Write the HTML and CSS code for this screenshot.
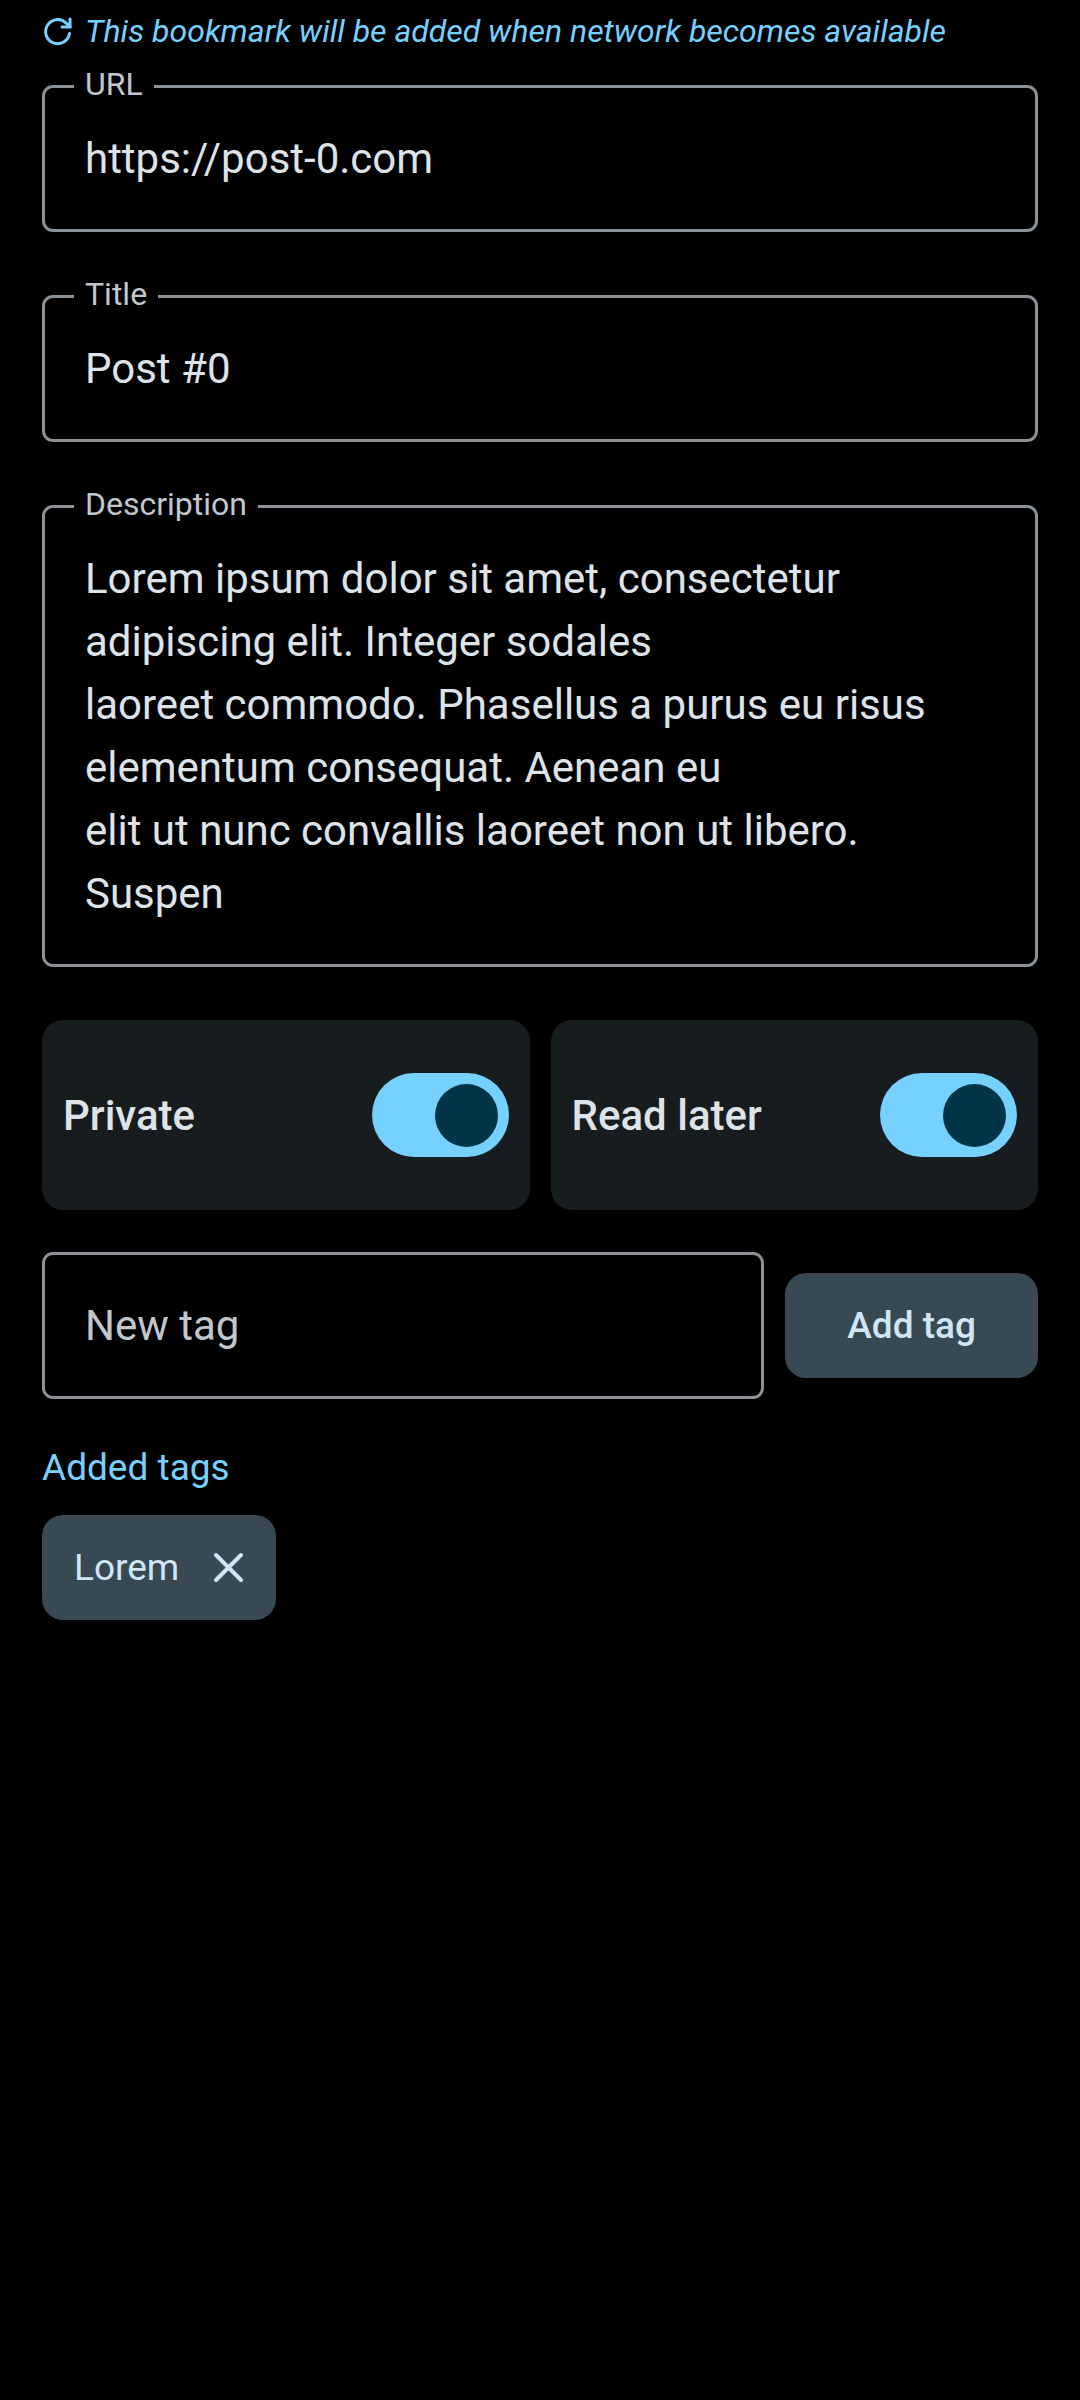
FILE: index.html
```html
<!DOCTYPE html>
<html lang="en">
<head>
<meta charset="utf-8">
<meta name="viewport" content="width=device-width, initial-scale=1">
<title>Edit bookmark</title>
<link rel="stylesheet" href="styles.css">
</head>
<body>
<main class="editor">
  <p class="status">
    <svg class="status-icon" viewBox="0 0 32 32" aria-hidden="true">
      <path d="M27.500 18.500A12 12 0 1 1 24 8L28 11.500"/>
      <path d="M28 4V12H20"/>
    </svg>
    <em>This bookmark will be added when network becomes available</em>
  </p>

  <form class="form">
    <div class="fields">
      <div class="field">
        <label class="field-label" for="url">URL</label>
        <input class="field-input" id="url" type="text" value="https://post-0.com">
      </div>
      <div class="field">
        <label class="field-label" for="title">Title</label>
        <input class="field-input" id="title" type="text" value="Post #0">
      </div>
      <div class="field">
        <label class="field-label" for="description">Description</label>
        <textarea class="field-input field-area" id="description" rows="6">Lorem ipsum dolor sit amet, consectetur adipiscing elit. Integer sodales
laoreet commodo. Phasellus a purus eu risus elementum consequat. Aenean eu
elit ut nunc convallis laoreet non ut libero. Suspen</textarea>
      </div>
    </div>

    <div class="toggles">
      <label class="toggle">Private
        <input class="switch" type="checkbox" role="switch" checked>
      </label>
      <label class="toggle">Read later
        <input class="switch" type="checkbox" role="switch" checked>
      </label>
    </div>

    <div class="new-tag">
      <input class="field-input" type="text" placeholder="New tag" aria-label="New tag">
      <button class="add-button" type="button">Add tag</button>
    </div>

    <section class="tags">
      <h2 class="tags-title">Added tags</h2>
      <button class="chip" type="button">Lorem
        <svg class="chip-icon" viewBox="0 0 42 42" aria-hidden="true">
          <path d="M9 8L34 33M34 8L9 33"/>
        </svg>
      </button>
    </section>
  </form>
</main>
</body>
</html>
```
FILE: styles.css
```css
:root {
  --background: #000;
  --surface: #171c1f;
  --outline: #8a9297;
  --text: #dee3e8;
  --text-muted: #c1c7cd;
  --primary: #76d1ff;
  --on-primary: #003548;
  --container: #384954;
  --on-container: #d1e5f4;
}

* {
  box-sizing: border-box;
}

body {
  margin: 0;
  background: var(--background);
  color: var(--text);
  font-family: Roboto, sans-serif;
  font-size: 42px;
  line-height: 63px;
}

input,
textarea,
button {
  font: inherit;
  color: inherit;
}

.editor {
  padding: 10px 42px 42px;
}

.status {
  display: flex;
  align-items: center;
  gap: 11px;
  margin: 0 0 33px;
  color: var(--primary);
  font-size: 32px;
  line-height: 42px;
}

.status-icon {
  flex: none;
  width: 32px;
  height: 32px;
  fill: none;
  stroke: currentColor;
  stroke-width: 3;
  stroke-linecap: round;
}

.form {
  display: flex;
  flex-direction: column;
  gap: 42px;
}

.fields {
  display: grid;
  gap: 63px;
  margin-bottom: 11px;
}

.field {
  position: relative;
  display: grid;
}

/* The label sits over the outline and cuts a notch in it. */
.field-label {
  position: absolute;
  top: -22px;
  left: 32px;
  padding: 0 11px;
  background: var(--background);
  color: var(--text-muted);
  font-size: 32px;
  line-height: 42px;
}

.field-input {
  display: block;
  width: 100%;
  min-width: 0;
  height: 147px;
  margin: 0;
  padding: 39px 40px;
  border: 3px solid var(--outline);
  border-radius: 11px;
  outline: none;
  background: transparent;
}

.field-input::placeholder {
  color: var(--text-muted);
  opacity: 1;
}

.field-area {
  height: auto;
  overflow: hidden;
  resize: none;
}

.toggles {
  display: grid;
  grid-template-columns: 1fr 1fr;
  gap: 21px;
}

.toggle {
  display: flex;
  align-items: center;
  justify-content: space-between;
  padding: 53px 21px;
  border-radius: 21px;
  background: var(--surface);
  font-weight: 500;
}

.switch {
  appearance: none;
  display: flex;
  width: 137px;
  height: 84px;
  margin: 0;
  padding: 0 11px;
  align-items: center;
  border-radius: 42px;
  background: var(--container);
}

.switch::before {
  content: "";
  width: 63px;
  height: 63px;
  border-radius: 50%;
  background: var(--outline);
}

.switch:checked {
  justify-content: flex-end;
  background: var(--primary);
}

.switch:checked::before {
  background: var(--on-primary);
}

.new-tag {
  display: flex;
  align-items: center;
  gap: 21px;
}

.add-button,
.chip {
  height: 105px;
  border: 0;
  border-radius: 21px;
  background: var(--container);
  color: var(--on-container);
  font-size: 37px;
  line-height: 53px;
}

.add-button {
  flex: none;
  padding: 0 62px;
  font-weight: 500;
}

.tags {
  display: flex;
  flex-direction: column;
  align-items: flex-start;
  gap: 21px;
}

.tags-title {
  margin: 0;
  color: var(--primary);
  font-size: 37px;
  font-weight: 400;
  line-height: 53px;
}

.chip {
  display: flex;
  align-items: center;
  gap: 28px;
  padding: 0 27px 0 32px;
}

.chip-icon {
  width: 42px;
  height: 42px;
  fill: none;
  stroke: currentColor;
  stroke-width: 4;
  stroke-linecap: round;
}
```
